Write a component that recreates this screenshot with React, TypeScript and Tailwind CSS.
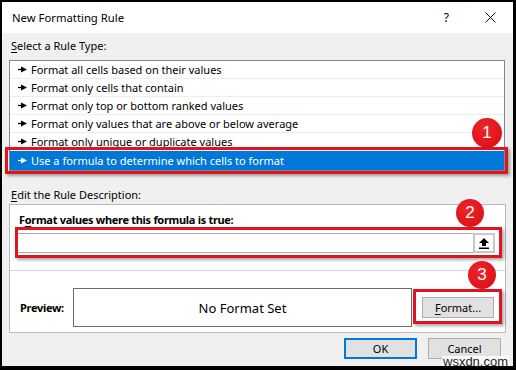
import React from "react";

const Arrow = ({ white }: { white?: boolean }) => (
  <svg width="9" height="7" viewBox="0 0 9 7" className="shrink-0">
    <path d="M0 3.5H4" stroke={white ? "#fff" : "#000"} strokeWidth="1.3" />
    <path d="M3 0.6L9 3.5L3 6.4Z" fill={white ? "#fff" : "#000"} />
  </svg>
);

const items = [
  "Format all cells based on their values",
  "Format only cells that contain",
  "Format only top or bottom ranked values",
  "Format only values that are above or below average",
  "Format only unique or duplicate values",
];

const Badge = ({ n, cls }: { n: string; cls: string }) => (
  <div
    className={`absolute rounded-full bg-[radial-gradient(circle_at_40%_35%,#f0242a,#d40d12)] text-white flex items-center justify-center text-[17px] font-['Liberation_Sans',sans-serif] ${cls}`}
  >
    {n}
  </div>
);

export default function App() {
  return (
    <div className="relative w-[516px] h-[370px] bg-[#f0f0f0] border-l-2 border-t-2 border-r-[3px] border-b-4 border-black text-[11px] leading-[16px] text-black font-['Noto_Sans',sans-serif] overflow-hidden">
      {/* title bar */}
      <div className="h-[31px] bg-white flex items-center pl-[10px]">
        <span className="flex-1 text-[11.3px]">New Formatting Rule</span>
        <span className="text-[12px] mr-[36px]">?</span>
        <svg width="11" height="11" viewBox="0 0 11 11" className="mr-[17px]">
          <path d="M0.5 0.5L10.5 10.5M10.5 0.5L0.5 10.5" stroke="#111" strokeWidth="1" />
        </svg>
      </div>

      {/* select rule type */}
      <div className="h-[27px] pt-[5px] pl-[9px]">
        <span className="underline underline-offset-2">S</span>elect a Rule Type:
      </div>
      <div className="ml-[7px] w-[496px] border border-[#828790] bg-white">
        {items.map((t) => (
          <div
            key={t}
            className="h-[18px] flex items-center pl-[8px] gap-[4px] border-b border-[#ececec]"
          >
            <Arrow />
            <span>{t}</span>
          </div>
        ))}
        <div className="h-[19px] flex items-center pl-[8px] gap-[4px] bg-[#0078d7] text-white">
          <Arrow white />
          <span>Use a formula to determine which cells to format</span>
        </div>
      </div>

      {/* edit description */}
      <div className="h-[33px] pt-[16px] pl-[9px]">
        <span className="underline underline-offset-2">E</span>dit the Rule Description:
      </div>
      <div className="ml-[7px] w-[497px] h-[129px] border border-[#b9b9b9] bg-white flex flex-col">
        <div className="h-[66px] border-b border-[#d5d5d5] pt-[7px]">
          <div className="pl-[9px] font-bold tracking-[-0.3px]">
            F<span className="underline underline-offset-2">o</span>rmat values where this formula is true:
          </div>
          <div className="relative ml-[7px] mt-[5px] w-[478px] h-[20px] border border-[#a8a8a8] bg-white">
            <div className="absolute right-[-1px] top-[-1px] w-[22px] h-[20px] border-2 border-[#c8c8c8] bg-white flex items-center justify-center">
              <svg width="10" height="11" viewBox="0 0 10 11">
                <path d="M5 0L10 5H7V8H3V5H0Z" fill="#000" />
                <rect x="0" y="9.5" width="10" height="1.5" fill="#000" />
              </svg>
            </div>
          </div>
        </div>
        <div className="pt-[17px] pl-[10px] flex items-center">
          <div className="w-[53px] font-bold tracking-[-0.3px]">Preview:</div>
          <div className="w-[339px] h-[39px] border border-[#6d6d6d] bg-white flex items-center justify-center text-[13px]">
            No Format Set
          </div>
          <div className="ml-[10px] w-[72px] h-[21px] border border-[#adadad] bg-[#e1e1e1] flex items-center justify-center">
            <span className="underline underline-offset-2">F</span>ormat...
          </div>
        </div>
      </div>

      {/* buttons */}
      <div className="mt-[5px] flex justify-end gap-[11px] pr-[12px] leading-[14px]">
        <div className="w-[73px] h-[21px] border-2 border-[#0078d7] bg-[#e1e1e1] flex items-center justify-center">
          OK
        </div>
        <div className="w-[73px] h-[21px] border border-[#adadad] bg-[#e1e1e1] flex items-center justify-center">
          Cancel
        </div>
      </div>

      {/* annotation overlays */}
      <div className="absolute left-[3px] top-[145px] w-[503px] h-[27px] border-[3px] border-[#e0141c] shadow-[2px_2px_3px_rgba(0,0,0,0.35)]" />
      <Badge n="1" cls="left-[470px] top-[116px] w-[30px] h-[30px]" />
      <div className="absolute left-[13px] top-[225px] w-[487px] h-[31px] border-[3px] border-[#e0141c] shadow-[2px_2px_3px_rgba(0,0,0,0.35)]" />
      <Badge n="2" cls="left-[454px] top-[197px] w-[28px] h-[28px]" />
      <Badge n="3" cls="left-[466px] top-[259px] w-[28px] h-[28px]" />
      <div className="absolute left-[411px] top-[287px] w-[89px] h-[35px] border-[3px] border-[#e0141c] shadow-[2px_2px_3px_rgba(0,0,0,0.35)]" />

      {/* watermark */}
      <div className="absolute left-[440px] top-[354px] bg-white/85 px-[1px] text-[13px] leading-[11px] text-[#222] font-['Liberation_Sans',sans-serif]">
        wsxdn.com
      </div>
    </div>
  );
}
